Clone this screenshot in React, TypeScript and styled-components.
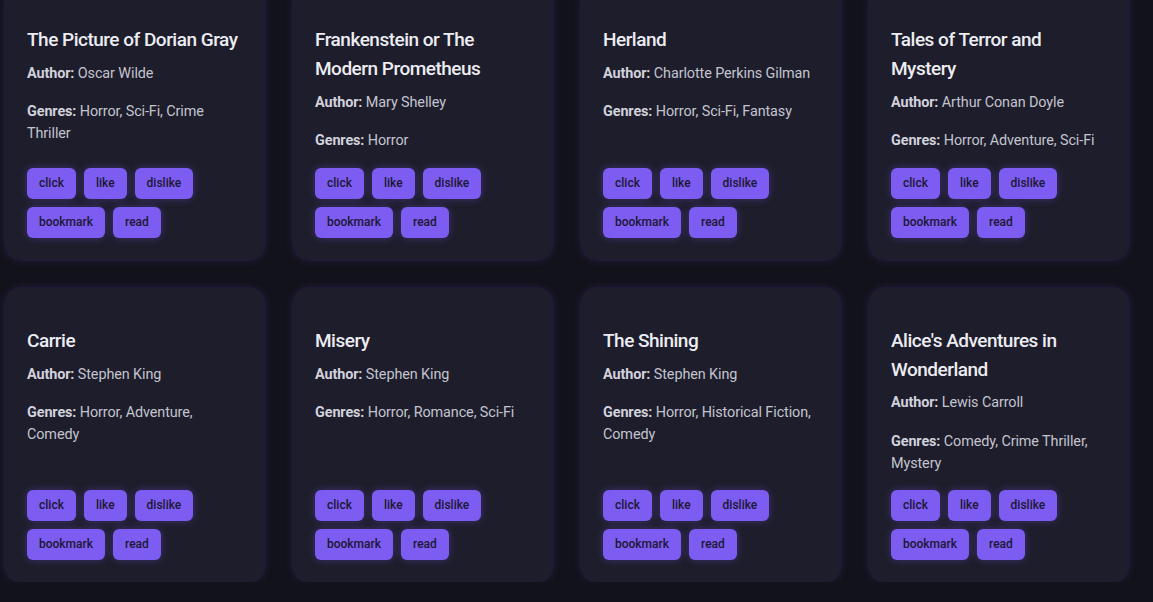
import styled, { createGlobalStyle } from 'styled-components';

const GlobalStyle = createGlobalStyle`
  html, body {
    margin: 0;
    padding: 0;
    background: #12121a;
    overflow: hidden;
  }
  body {
    font-family: Roboto, "Noto Sans", sans-serif;
    color: #c6c6d1;
  }
`;

type Book = {
  title: string;
  author: string;
  genres: string[];
};

const BOOKS: Book[] = [
  { title: 'The Picture of Dorian Gray', author: 'Oscar Wilde', genres: ['Horror', 'Sci-Fi', 'Crime Thriller'] },
  { title: 'Frankenstein or The Modern Prometheus', author: 'Mary Shelley', genres: ['Horror'] },
  { title: 'Herland', author: 'Charlotte Perkins Gilman', genres: ['Horror', 'Sci-Fi', 'Fantasy'] },
  { title: 'Tales of Terror and Mystery', author: 'Arthur Conan Doyle', genres: ['Horror', 'Adventure', 'Sci-Fi'] },
  { title: 'Carrie', author: 'Stephen King', genres: ['Horror', 'Adventure', 'Comedy'] },
  { title: 'Misery', author: 'Stephen King', genres: ['Horror', 'Romance', 'Sci-Fi'] },
  { title: 'The Shining', author: 'Stephen King', genres: ['Horror', 'Historical Fiction', 'Comedy'] },
  { title: "Alice's Adventures in Wonderland", author: 'Lewis Carroll', genres: ['Comedy', 'Crime Thriller', 'Mystery'] },
];

const ACTIONS = ['click', 'like', 'dislike', 'bookmark', 'read'];

const Grid = styled.main`
  display: grid;
  grid-template-columns: repeat(4, 260px);
  column-gap: 28px;
  row-gap: 28px;
  padding-left: 5px;
  margin-top: -13px;
`;

const Card = styled.article`
  display: flex;
  flex-direction: column;
  padding: 22px;
  background: #1d1d2b;
  border-radius: 16px;
  box-shadow:
    0 0 0 1px rgba(110, 80, 220, 0.08),
    0 0 10px rgba(100, 70, 210, 0.22);
`;

const Title = styled.h3`
  margin: 17px 0 8px;
  font-size: 19px;
  line-height: 28.8px;
  font-weight: 500;
  letter-spacing: -0.5px;
  color: #ececf2;
`;

const Line = styled.p<{ $gap?: number }>`
  margin: 0 0 ${(p) => p.$gap ?? 0}px;
  font-size: 14.4px;
  line-height: 21.6px;
  letter-spacing: -0.1px;
  color: #c4c4cf;

  strong {
    font-weight: 700;
    color: #d2d2dc;
  }
`;

const Actions = styled.div`
  display: flex;
  flex-wrap: wrap;
  gap: 8px;
  margin-top: auto;
  padding-top: 16px;
`;

const ActionButton = styled.button`
  font-family: inherit;
  font-size: 12px;
  line-height: 15px;
  font-weight: 500;
  padding: 8px 12px;
  border: none;
  border-radius: 6px;
  background: #7d5cf1;
  color: #1b1833;
  box-shadow: 0 0 8px rgba(125, 92, 241, 0.35);
  cursor: pointer;
`;

function BookCard({ book }: { book: Book }) {
  return (
    <Card>
      <Title>{book.title}</Title>
      <Line $gap={17}>
        <strong>Author:</strong> {book.author}
      </Line>
      <Line>
        <strong>Genres:</strong> {book.genres.join(', ')}
      </Line>
      <Actions>
        {ACTIONS.map((a) => (
          <ActionButton key={a}>{a}</ActionButton>
        ))}
      </Actions>
    </Card>
  );
}

export default function App() {
  return (
    <>
      <GlobalStyle />
      <Grid>
        {BOOKS.map((b) => (
          <BookCard key={b.title} book={b} />
        ))}
      </Grid>
    </>
  );
}
